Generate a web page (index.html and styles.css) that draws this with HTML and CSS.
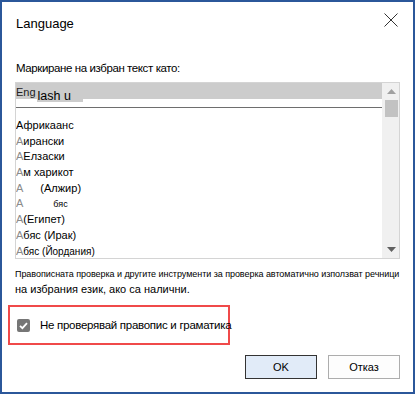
FILE: index.html
```html
<!DOCTYPE html>
<html lang="bg">
<head>
<meta charset="utf-8">
<title>Language</title>
<link rel="stylesheet" href="styles.css">
</head>
<body>
<div class="window">
  <div class="header">
    <span class="title">Language</span>
    <svg class="close" width="14" height="14" viewBox="0 0 14 14"><path d="M0.5 0.5 L13.5 13.5 M13.5 0.5 L0.5 13.5" stroke="#333" stroke-width="1" fill="none"/></svg>
  </div>
  <div class="label">Маркиране на избран текст като:</div>
  <div class="listbox">
    <div class="list">
      <div class="selected"><span class="eng">Eng</span><span class="lash">lash u</span></div>
      <div class="sep"></div>
      <div class="items">
        <div class="item">Африкаанс</div>
        <div class="item"><span class="a">А</span>ирански</div>
        <div class="item"><span class="a">А</span>Елзаски</div>
        <div class="item"><span class="a">А</span>м харикот</div>
        <div class="item"><span class="a">А</span><span class="gap1"></span>(Алжир)</div>
        <div class="item"><span class="a">А</span><span class="gap2"></span><span class="tiny">бяс</span></div>
        <div class="item"><span class="a">А</span>(Египет)</div>
        <div class="item"><span class="a">А</span>бяс (Ирак)</div>
        <div class="item"><span class="a">А</span><span class="small">бяс (Йордания)</span></div>
      </div>
    </div>
    <div class="scrollbar">
      <svg class="arrow up" width="9" height="5" viewBox="0 0 9 5"><path d="M4.5 0 L9 5 L0 5 Z" fill="#a0a0a0"/></svg>
      <div class="thumb"></div>
      <div class="track"></div>
      <svg class="arrow down" width="9" height="5" viewBox="0 0 9 5"><path d="M0 0 L9 0 L4.5 5 Z" fill="#606060"/></svg>
    </div>
  </div>
  <div class="note">
    <div class="note1">Правописната проверка и другите инструменти за проверка автоматично използват речници</div>
    <div class="note2">на избрания език, ако са налични.</div>
  </div>
  <div class="check-box">
    <span class="checkbox"><svg width="13" height="13" viewBox="0 0 13 13"><path d="M3 6.8 L5.4 9.2 L10 4.2" stroke="#fff" stroke-width="1.8" fill="none"/></svg></span>
    <span class="check-label">Не проверявай правопис и граматика</span>
  </div>
  <div class="buttons">
    <button class="btn btn-ok">OK</button>
    <button class="btn">Отказ</button>
  </div>
</div>
</body>
</html>
```
FILE: styles.css
```css
html, body {
  margin: 0;
  padding: 0;
  background: #fff;
}
.window {
  width: 415px;
  height: 394px;
  box-sizing: border-box;
  border: 2px solid #2b579a;
  background: #fff;
  padding: 0 13px;
  font-family: "Liberation Sans", Arial, sans-serif;
  color: #000;
  display: flex;
  flex-direction: column;
  overflow: hidden;
}
.header {
  display: flex;
  justify-content: space-between;
  align-items: flex-start;
  padding-top: 12px;
  height: 46px;
  box-sizing: border-box;
  flex-shrink: 0;
}
.title {
  font-size: 13px;
  line-height: 20px;
  padding-left: 1px;
}
.close {
  margin-top: -1px;
  margin-right: 2px;
}
.label {
  font-size: 11.5px;
  letter-spacing: -0.4px;
  line-height: 16px;
  padding-left: 1px;
  height: 22px;
  margin-top: 12px;
  flex-shrink: 0;
  white-space: nowrap;
}
.listbox {
  height: 177px;
  flex-shrink: 0;
  box-sizing: border-box;
  border: 1px solid #d4d4d4;
  display: flex;
}
.list {
  flex: 1;
  display: flex;
  flex-direction: column;
  overflow: hidden;
}
.selected {
  height: 16px;
  flex-shrink: 0;
  background: #cccccc;
  display: flex;
  align-items: flex-start;
}
.eng {
  font-size: 11px;
  line-height: 12px;
  margin-top: 3px;
  color: #222;
}
.lash {
  font-size: 12.5px;
  line-height: 12px;
  margin-top: 7px;
  margin-left: 1px;
  padding: 0 12px 0 1px;
  background: #cccccc;
}
.sep {
  height: 1px;
  flex-shrink: 0;
  background: #6e6e6e;
  margin-top: 8px;
}
.items {
  padding-top: 10px;
  flex-shrink: 0;
}
.item {
  font-size: 11px;
  line-height: 15.7px;
  height: 15.7px;
  white-space: nowrap;
}
.a {
  color: #8a8a8a;
}
.gap1 {
  display: inline-block;
  width: 17px;
}
.gap2 {
  display: inline-block;
  width: 30px;
}
.tiny {
  font-size: 9px;
}
.small {
  font-size: 10px;
}
.scrollbar {
  width: 16px;
  flex-shrink: 0;
  background: #f0f0f0;
  border-left: 1px solid #f0f0f0;
  display: flex;
  flex-direction: column;
  align-items: center;
}
.arrow.up {
  margin: 6px 0 6px;
}
.arrow.down {
  margin: 0 0 6px;
}
.thumb {
  width: 13px;
  height: 17px;
  background: #c2c2c2;
}
.track {
  flex: 1;
}
.note {
  padding-top: 8px;
  height: 46px;
  box-sizing: border-box;
  flex-shrink: 0;
}
.note1 {
  font-size: 9px;
  line-height: 14px;
  white-space: nowrap;
  letter-spacing: -0.05px;
}
.note2 {
  font-size: 11px;
  line-height: 17px;
}
.check-box {
  margin-left: -7px;
  width: 222px;
  height: 40px;
  flex-shrink: 0;
  box-sizing: border-box;
  border: 2px solid #f04a4a;
  display: flex;
  align-items: center;
  white-space: nowrap;
}
.checkbox {
  width: 13px;
  height: 13px;
  border-radius: 2px;
  background: #767676;
  margin-left: 7px;
  display: flex;
  flex-shrink: 0;
}
.check-label {
  font-size: 11.5px;
  letter-spacing: -0.28px;
  margin-left: 10px;
}
.buttons {
  display: flex;
  justify-content: flex-end;
  gap: 11px;
  margin-top: 10px;
}
.btn {
  width: 72px;
  height: 24px;
  box-sizing: border-box;
  font-family: "Liberation Sans", Arial, sans-serif;
  font-size: 11px;
  background: #fdfdfd;
  border: 1px solid #adadad;
  border-radius: 0;
  padding: 0;
  color: #000;
}
.btn-ok {
  background: #e1ebf8;
  border-color: #333;
}
```
